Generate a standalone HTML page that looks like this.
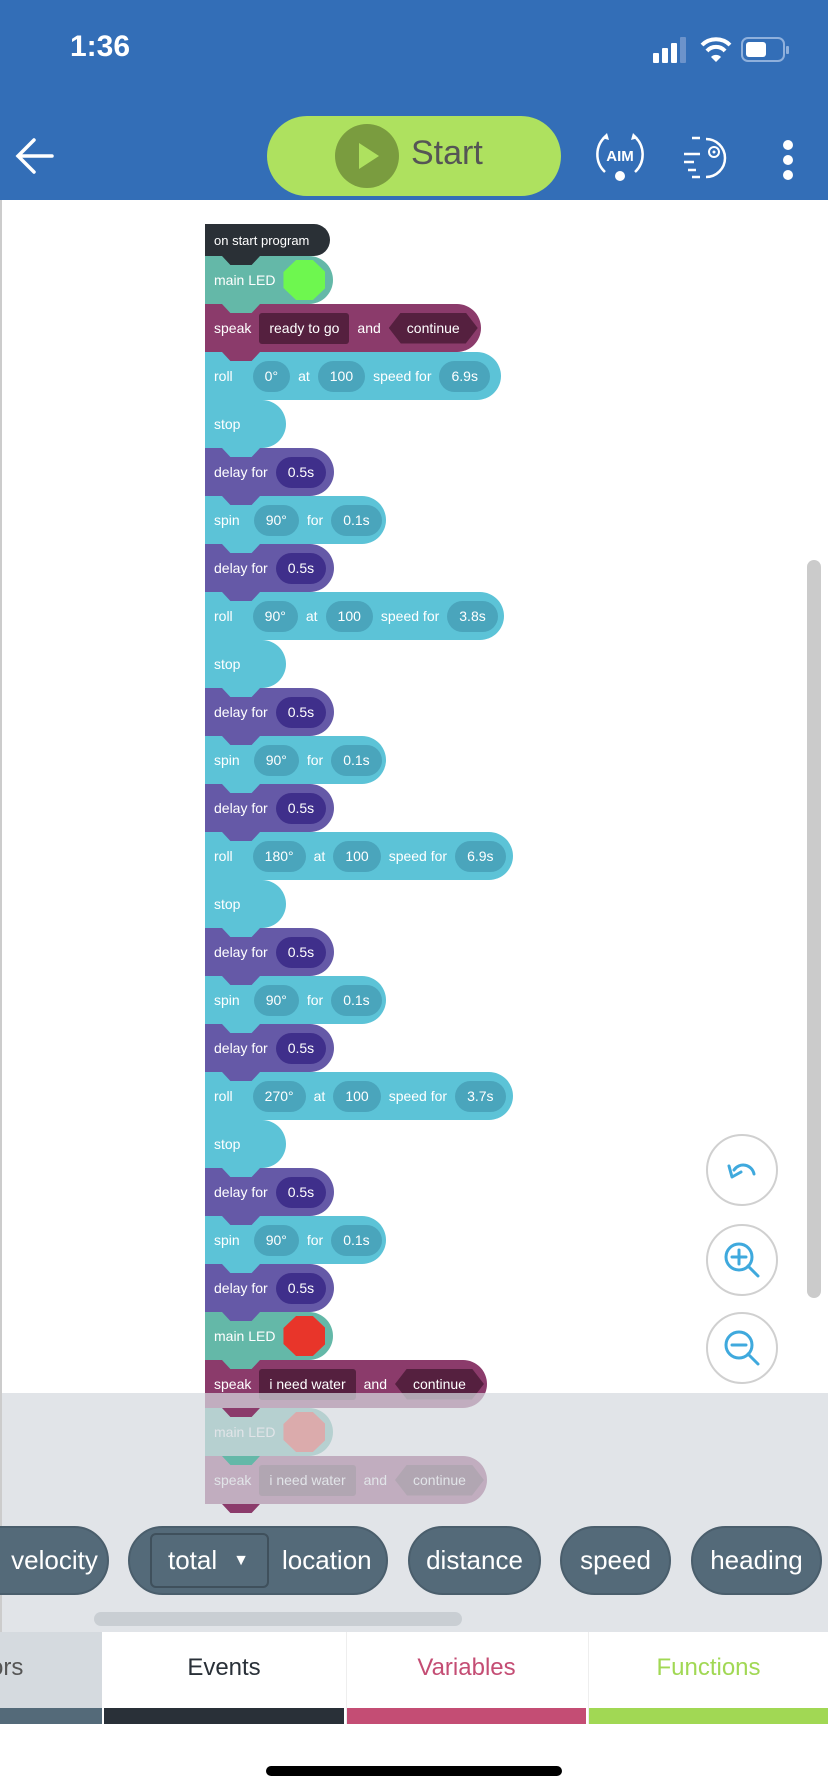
<!DOCTYPE html>
<html><head><meta charset="utf-8"><style>
*{margin:0;padding:0;box-sizing:border-box}
body{width:828px;height:1792px;position:relative;overflow:hidden;background:#fff;font-family:"Liberation Sans",sans-serif}
.hdr{position:absolute;left:0;top:0;width:828px;height:200px;background:#336EB7}
.canvas{position:absolute;left:0;top:200px;width:828px;height:1432px;border-left:2px solid #ccc}
.b{position:absolute;left:205px;height:48px;display:flex;align-items:center;padding-left:9px;gap:8px;color:#fff;font-size:14px;border-radius:0 24px 24px 0;white-space:nowrap}
.b .t{position:absolute;left:17px;bottom:-9px;width:38px;height:9px;clip-path:polygon(0 0,100% 0,78% 100%,22% 100%);z-index:2}
.p{height:31px;border-radius:16px;padding:0 12px;display:flex;align-items:center}
.cy{background:#5CC3D7}.cy .p{background:#4AA5BC}.cy .t{background:#5CC3D7}
.pu{background:#6559A7}.pu .p{background:#3F2F8B}.pu .t{background:#6559A7}
.mg{background:#8B3B6B}.mg .t{background:#8B3B6B}
.tl{background:#64B8A8}.tl .t{background:#64B8A8}
.box{background:#55203F;height:31px;padding:0 10px;border-radius:3px;display:flex;align-items:center}
.hex{background:#55203F;height:31px;padding:0 18px;display:flex;align-items:center;clip-path:polygon(12px 0,calc(100% - 12px) 0,100% 50%,calc(100% - 12px) 100%,12px 100%,0 50%)}
.oct{width:42px;height:40px;clip-path:polygon(30% 0,70% 0,100% 30%,100% 70%,70% 100%,30% 100%,0 70%,0 30%)}
.pill{position:absolute;top:1526px;height:69px;border-radius:35px;background:#546A79;border:2px solid #4A5E6C;color:#fff;font-size:26px;display:flex;align-items:center;justify-content:center}
.tab{position:absolute;top:1632px;height:92px;background:#fff;font-size:24px;display:flex;justify-content:center;padding-top:22px}
.bar{position:absolute;left:0;right:0;bottom:0;height:16px}
.fb{position:absolute;left:706px;width:72px;height:72px;border-radius:50%;background:#fff;border:2px solid #d0d0d0;display:flex;align-items:center;justify-content:center}
</style></head><body>
<div class="hdr">
<div style="position:absolute;left:70px;top:30px;color:#fff;font-size:30px;font-weight:bold">1:36</div>
<svg style="position:absolute;left:650px;top:36px" width="146" height="28">
<rect x="3" y="17" width="6" height="10" rx="1" fill="#fff"/><rect x="12" y="12" width="6" height="15" rx="1" fill="#fff"/><rect x="21" y="7" width="6" height="20" rx="1" fill="#fff"/><rect x="30" y="1" width="6" height="26" rx="1" fill="#6C93CB"/>
<path d="M52 9 A20 20 0 0 1 80 9" stroke="#fff" stroke-width="4" fill="none"/><path d="M57 15 A12 12 0 0 1 75 15" stroke="#fff" stroke-width="4" fill="none"/><path d="M61 21 L66 26 L71 21 A7 7 0 0 0 61 21Z" fill="#fff"/>
<rect x="92" y="2" width="42" height="23" rx="6" stroke="#8FB0DC" stroke-width="2" fill="none"/><rect x="96" y="6" width="20" height="15" rx="3" fill="#fff"/><rect x="136" y="10" width="3" height="8" rx="1" fill="#8FB0DC"/>
</svg>
<svg style="position:absolute;left:14px;top:136px" width="42" height="40"><path d="M38 20 H4 M20 4 L4 20 L20 36" stroke="#fff" stroke-width="3.5" fill="none" stroke-linecap="round"/></svg>
<div style="position:absolute;left:267px;top:116px;width:294px;height:80px;border-radius:40px;background:#AEE15F"></div>
<div style="position:absolute;left:335px;top:124px;width:64px;height:64px;border-radius:50%;background:#7A9C3F"></div>
<svg style="position:absolute;left:357px;top:141px" width="24" height="30"><path d="M2 2 L22 15 L2 28Z" fill="#AEE15F"/></svg>
<div style="position:absolute;left:411px;top:134px;font-size:34px;color:#555">Start</div>
<svg style="position:absolute;left:594px;top:130px" width="52" height="52">
<path d="M12 6 A24 24 0 0 0 11 42" stroke="#fff" stroke-width="2.5" fill="none"/><path d="M40 6 A24 24 0 0 1 41 42" stroke="#fff" stroke-width="2.5" fill="none"/>
<path d="M8 8 L13 3 L15 10Z M44 8 L39 3 L37 10Z" fill="#fff"/>
<text x="26" y="31" text-anchor="middle" fill="#fff" font-size="15" font-weight="bold" font-family="Liberation Sans">AIM</text><circle cx="26" cy="46" r="5" fill="#fff"/></svg>
<svg style="position:absolute;left:680px;top:132px" width="50" height="50">
<path d="M12 6 H20 M4 22 H20 M4 30 H14 M8 38 H16 M12 45 H20" stroke="#fff" stroke-width="2.5"/><path d="M26 7 A19 19 0 0 1 26 45" stroke="#fff" stroke-width="2.5" fill="none"/><circle cx="34" cy="20" r="5" stroke="#fff" stroke-width="2" fill="none"/><circle cx="34" cy="20" r="1.5" fill="#fff"/></svg>
<div style="position:absolute;left:783px;top:140px;width:10px;height:10px;border-radius:50%;background:#fff;box-shadow:0 15px 0 #fff,0 30px 0 #fff"></div>
</div>
<div class="canvas"></div>

<div class="b" style="top:224px;height:32px;width:125px;background:#2A3036;border-radius:0 16px 16px 0;font-size:13px">on start program<div class="t" style="background:#2A3036"></div></div>
<div class="b tl" style="top:256px;width:128px">main LED<div class="oct" style="background:#6EF74F"></div><div class="t"></div></div>
<div class="b mg" style="top:304px;width:276px">speak<div class="box">ready to go</div>and<div class="hex">continue</div><div class="t"></div></div>
<div class="b cy" style="top:352px;width:296px;gap:8px">roll<div class="p" style="margin-left:12px">0°</div>at<div class="p">100</div>speed for<div class="p">6.9s</div><div class="t"></div></div>
<div class="b cy" style="top:400px;width:81px">stop<div class="t"></div></div>
<div class="b pu" style="top:448px;width:129px">delay for<div class="p">0.5s</div><div class="t"></div></div>
<div class="b cy" style="top:496px;width:181px">spin<div class="p" style="margin-left:6px">90°</div>for<div class="p">0.1s</div><div class="t"></div></div>
<div class="b pu" style="top:544px;width:129px">delay for<div class="p">0.5s</div><div class="t"></div></div>
<div class="b cy" style="top:592px;width:299px">roll<div class="p" style="margin-left:12px">90°</div>at<div class="p">100</div>speed for<div class="p">3.8s</div><div class="t"></div></div>
<div class="b cy" style="top:640px;width:81px">stop<div class="t"></div></div>
<div class="b pu" style="top:688px;width:129px">delay for<div class="p">0.5s</div><div class="t"></div></div>
<div class="b cy" style="top:736px;width:181px">spin<div class="p" style="margin-left:6px">90°</div>for<div class="p">0.1s</div><div class="t"></div></div>
<div class="b pu" style="top:784px;width:129px">delay for<div class="p">0.5s</div><div class="t"></div></div>
<div class="b cy" style="top:832px;width:308px">roll<div class="p" style="margin-left:12px">180°</div>at<div class="p">100</div>speed for<div class="p">6.9s</div><div class="t"></div></div>
<div class="b cy" style="top:880px;width:81px">stop<div class="t"></div></div>
<div class="b pu" style="top:928px;width:129px">delay for<div class="p">0.5s</div><div class="t"></div></div>
<div class="b cy" style="top:976px;width:181px">spin<div class="p" style="margin-left:6px">90°</div>for<div class="p">0.1s</div><div class="t"></div></div>
<div class="b pu" style="top:1024px;width:129px">delay for<div class="p">0.5s</div><div class="t"></div></div>
<div class="b cy" style="top:1072px;width:308px">roll<div class="p" style="margin-left:12px">270°</div>at<div class="p">100</div>speed for<div class="p">3.7s</div><div class="t"></div></div>
<div class="b cy" style="top:1120px;width:81px">stop<div class="t"></div></div>
<div class="b pu" style="top:1168px;width:129px">delay for<div class="p">0.5s</div><div class="t"></div></div>
<div class="b cy" style="top:1216px;width:181px">spin<div class="p" style="margin-left:6px">90°</div>for<div class="p">0.1s</div><div class="t"></div></div>
<div class="b pu" style="top:1264px;width:129px">delay for<div class="p">0.5s</div><div class="t"></div></div>
<div class="b tl" style="top:1312px;width:128px">main LED<div class="oct" style="background:#E8352A"></div><div class="t"></div></div>
<div class="b mg" style="top:1360px;width:282px">speak<div class="box">i need water</div>and<div class="hex">continue</div><div class="t"></div></div>
<div class="b tl" style="top:1408px;width:128px">main LED<div class="oct" style="background:#E8352A"></div><div class="t"></div></div>
<div class="b mg" style="top:1456px;width:282px">speak<div class="box">i need water</div>and<div class="hex">continue</div><div class="t"></div></div>

<div style="position:absolute;left:807px;top:560px;width:14px;height:738px;border-radius:7px;background:#CBCBCB"></div>
<div class="fb" style="top:1134px"><svg width="40" height="40"><path d="M12 20 A11 11 0 0 1 32 24" stroke="#3FA9DD" stroke-width="3" fill="none" stroke-linecap="round"/><path d="M7 16 L10 27 L19 22" stroke="#3FA9DD" stroke-width="3" fill="none" stroke-linecap="round" stroke-linejoin="round"/></svg></div>
<div class="fb" style="top:1224px"><svg width="44" height="44"><circle cx="19" cy="19" r="13" stroke="#3FA9DD" stroke-width="3" fill="none"/><path d="M19 12 V26 M12 19 H26 M28 28 L38 38" stroke="#3FA9DD" stroke-width="3" stroke-linecap="round"/></svg></div>
<div class="fb" style="top:1312px"><svg width="44" height="44"><circle cx="19" cy="19" r="13" stroke="#3FA9DD" stroke-width="3" fill="none"/><path d="M12 19 H26 M28 28 L38 38" stroke="#3FA9DD" stroke-width="3" stroke-linecap="round"/></svg></div>

<div style="position:absolute;left:0;top:1393px;width:828px;height:239px;background:rgba(213,218,223,0.72);border-left:2px solid #ccc"></div>
<div class="pill" style="left:-40px;width:149px;padding-left:40px">velocity</div>
<div class="pill" style="left:128px;width:260px;justify-content:flex-start"><div style="margin-left:20px;width:119px;height:55px;border:2px solid #3F505C;border-radius:6px;display:flex;align-items:center;padding-left:16px">total<span style="margin-left:16px;font-size:16px">▼</span></div><span style="margin-left:13px">location</span></div>
<div class="pill" style="left:408px;width:133px">distance</div>
<div class="pill" style="left:560px;width:111px">speed</div>
<div class="pill" style="left:691px;width:131px">heading</div>
<div style="position:absolute;left:94px;top:1612px;width:368px;height:14px;border-radius:7px;background:#C9CED3"></div>

<div class="tab" style="left:0;width:102px;background:#D5DADF;justify-content:flex-start;color:#555;padding-left:0"><span style="margin-left:-10px">ors</span><div class="bar" style="background:#546A79"></div></div>
<div class="tab" style="left:104px;width:240px;color:#293038">Events<div class="bar" style="background:#293038"></div></div>
<div class="tab" style="left:346px;width:240px;color:#C44D74;border-left:1px solid #eee">Variables<div class="bar" style="background:#C44D74"></div></div>
<div class="tab" style="left:588px;width:240px;color:#A1D854;border-left:1px solid #eee">Functions<div class="bar" style="background:#A1D854"></div></div>
<div style="position:absolute;left:266px;top:1766px;width:296px;height:10px;border-radius:5px;background:#000"></div>
</body></html>
